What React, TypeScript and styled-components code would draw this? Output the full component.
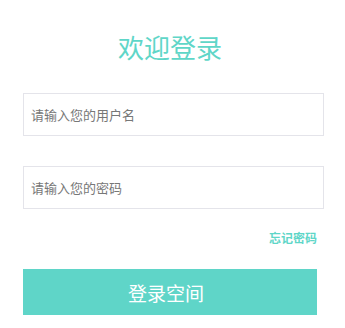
import { createGlobalStyle, styled } from 'styled-components';

const GlobalStyle = createGlobalStyle`
    * {
        box-sizing: border-box;
    }
    body {
        margin: 0;
        background: #fff;
        font-family: "Noto Sans CJK SC", "Noto Sans", sans-serif;
    }
`;

const LoginBox = styled.div`
    width: 294px;
    margin-left: 23px;
    padding-top: 29px;
`;

const Title = styled.h1`
    margin: 0 0 28px;
    font-size: 26px;
    font-weight: 400;
    line-height: 36px;
    text-align: center;
    color: #5fd6c8;
`;

const Field = styled.input`
    display: block;
    width: 301px;
    height: 43px;
    margin-bottom: 30px;
    padding: 0 7px;
    border: 1px solid #e4e4ea;
    outline: none;
    font-family: inherit;
    font-size: 13px;
    color: #333;
    &::placeholder {
        color: #777;
    }
`;

const ForgetRow = styled.div`
    display: flex;
    justify-content: flex-end;
    margin-top: -10px;
`;

const ForgetLink = styled.a`
    font-size: 12px;
    font-weight: 700;
    line-height: 18px;
    color: #5fd6c8;
    text-decoration: none;
    cursor: pointer;
`;

const SubmitButton = styled.button`
    display: block;
    width: 294px;
    height: 46px;
    margin-top: 22px;
    padding: 0 8px 0 0;
    border: none;
    background-color: #5fd5c8;
    color: #fff;
    font-family: inherit;
    font-size: 19px;
    cursor: pointer;
`;

export default function App() {
    return (
        <>
            <GlobalStyle />
            <LoginBox>
                <Title>欢迎登录</Title>
                <Field placeholder="请输入您的用户名" />
                <Field type="password" placeholder="请输入您的密码" />
                <ForgetRow>
                    <ForgetLink>忘记密码</ForgetLink>
                </ForgetRow>
                <SubmitButton>登录空间</SubmitButton>
            </LoginBox>
        </>
    );
}
